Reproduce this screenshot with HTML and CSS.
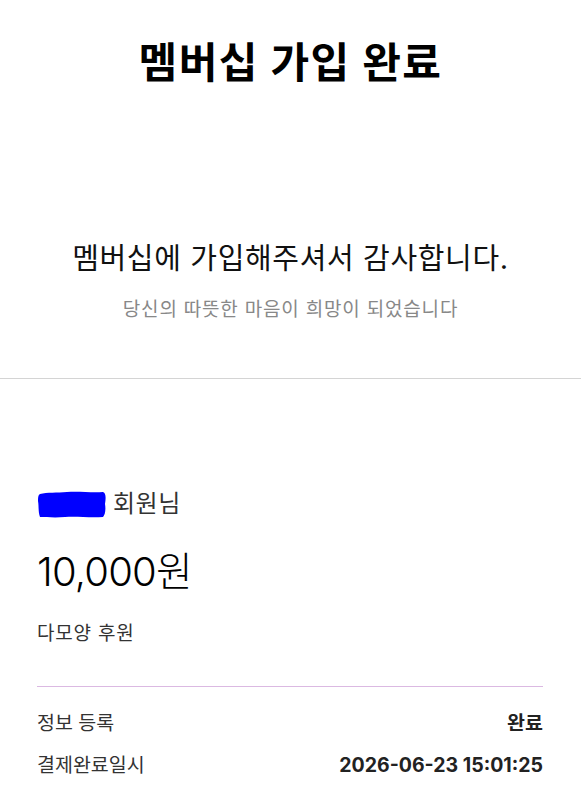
FILE: index.html
```html
<!DOCTYPE html>
<html lang="ko">
<head>
<meta charset="utf-8">
<title>멤버십 가입 완료</title>
<link rel="stylesheet" href="styles.css">
</head>
<body>
<main class="page">
  <section class="hero">
    <h1 class="title">멤버십 가입 완료</h1>
    <p class="thanks">멤버십에 가입해주셔서 감사합니다.</p>
    <p class="sub">당신의 따뜻한 마음이 희망이 되었습니다</p>
  </section>
  <section class="detail">
    <p class="member"><svg class="redact" width="70" height="28" viewBox="0 0 70 28"><path d="M3 4 C10 2 20 3 30 2 C42 1 55 3 66 2 C69 3 69 8 68 14 C69 20 68 25 66 27 C52 28 40 26 28 27 C18 28 8 27 3 27 C1 22 2 16 1 11 C1 8 1 5 3 4 Z" fill="#0000ff"/></svg>회원님</p>
    <p class="amount">10,000원</p>
    <p class="product">다모양 후원</p>
    <dl class="rows">
      <div class="row"><dt>정보 등록</dt><dd>완료</dd></div>
      <div class="row"><dt>결제완료일시</dt><dd>2026-06-23 15:01:25</dd></div>
    </dl>
  </section>
</main>
</body>
</html>
```
FILE: styles.css
```css
* { box-sizing: border-box; }
html, body { margin: 0; padding: 0; background: #fff; }
body {
  font-family: "Inter", "Noto Sans CJK KR", sans-serif;
  color: #222;
}
.page { width: 581px; }
.hero {
  padding: 38px 0 56px;
  text-align: center;
  border-bottom: 1px solid #d4d4d4;
}
.title {
  margin: 0;
  font-size: 42px;
  line-height: 50px;
  font-weight: 700;
  letter-spacing: 1.5px;
  color: #000;
}
.thanks {
  margin: 153px 0 0;
  font-size: 29px;
  line-height: 36px;
  font-weight: 400;
  letter-spacing: 0.65px;
  color: #111;
}
.sub {
  margin: 21px 0 0;
  font-size: 19px;
  line-height: 24px;
  letter-spacing: 0.8px;
  color: #888;
}
.detail {
  padding: 0 38px 0 37px;
}
.member {
  margin: 110px 0 0;
  font-size: 24px;
  line-height: 30px;
  letter-spacing: 0.5px;
  color: #333;
  display: flex;
  align-items: center;
  gap: 6px;
}
.redact {
  display: block;
  flex: none;
}
.amount {
  margin: 29px 0 0;
  font-size: 40px;
  line-height: 48px;
  font-weight: 300;
  letter-spacing: -0.02em;
  color: #000;
}
.product {
  margin: 26px 0 0;
  font-size: 19px;
  line-height: 24px;
  letter-spacing: 0.8px;
  color: #333;
}
.rows {
  margin: 40px 0 0;
  padding-top: 24px;
  border-top: 1px solid #dbb9e2;
  display: flex;
  flex-direction: column;
  gap: 18px;
}
.row {
  display: flex;
  justify-content: space-between;
  align-items: center;
  font-size: 19.5px;
  line-height: 24px;
}
.row dt { color: #333; }
.row dd { margin: 0; font-weight: 700; color: #222; font-size: 19.5px; }
```
